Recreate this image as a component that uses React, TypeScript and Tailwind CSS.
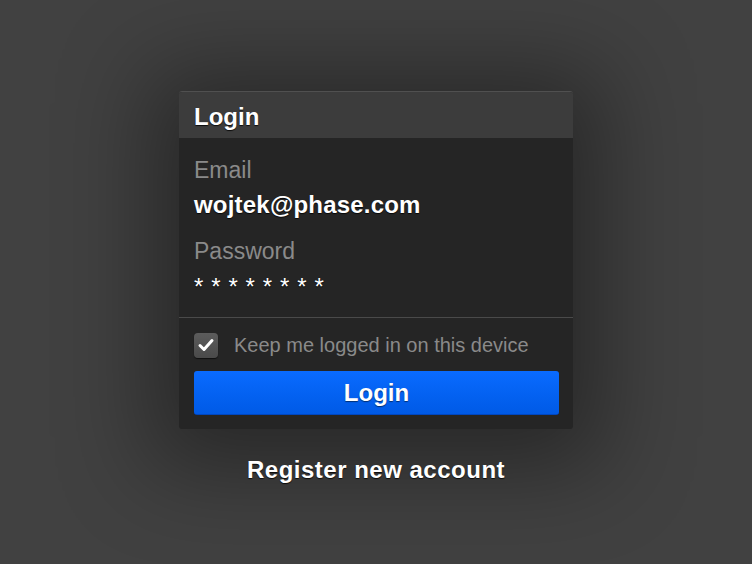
import React from "react";

export default function App() {
  const font = { fontFamily: '"Liberation Sans", Arial, Helvetica, sans-serif' };
  return (
    <div
      className="w-[752px] h-[564px] bg-[#414141] flex flex-col items-center pt-[91px] overflow-hidden"
      style={font}
    >
      <div className="w-[394px] rounded-[3px] bg-[#252525] shadow-[0_10px_90px_30px_rgba(0,0,0,0.38)] overflow-hidden border-t border-[#505050]">
        <div className="h-[46px] bg-[#3c3c3c] px-[15px] pt-[3px] flex items-center">
          <span className="text-[24px] leading-[28px] font-bold text-white [text-shadow:0_1px_1px_rgba(0,0,0,0.8)]">
            Login
          </span>
        </div>
        <div className="px-[15px] pt-[18px] pb-[16px] flex flex-col">
          <div className="text-[23px] leading-[28px] text-[#8a8a8a]">Email</div>
          <div className="mt-[7px] text-[24px] leading-[28px] font-bold text-white tracking-[0.2px] [text-shadow:0_1px_1px_rgba(0,0,0,0.8)]">
            wojtek@phase.com
          </div>
          <div className="mt-[18px] text-[23px] leading-[28px] text-[#8a8a8a]">Password</div>
          <div className="mt-[8px] text-[24px] leading-[28px] text-white tracking-[0.6px] [text-shadow:0_1px_1px_rgba(0,0,0,0.8)]">
            * * * * * * * *
          </div>
        </div>
        <div className="border-t border-[#4a4a4a] px-[15px] pt-[15px] pb-[14px] flex flex-col">
          <div className="flex items-center h-[24px]">
            <div className="w-[24px] h-[25px] rounded-[4px] bg-gradient-to-b from-[#5c5c5c] to-[#4a4a4a] shadow-[0_1px_1px_rgba(0,0,0,0.6)] flex items-center justify-center">
              <svg width="18" height="16" viewBox="0 0 18 16">
                <path
                  d="M3 8.5 L7 12.5 L15 3.5"
                  fill="none"
                  stroke="#ffffff"
                  strokeWidth="3"
                  strokeLinecap="round"
                  strokeLinejoin="round"
                />
              </svg>
            </div>
            <span className="ml-[16px] text-[20px] leading-[24px] text-[#8a8a8a]">
              Keep me logged in on this device
            </span>
          </div>
          <button className="mt-[14px] h-[44px] w-[365px] rounded-[3px] bg-gradient-to-b from-[#0a6bff] to-[#005ae6] border-b border-[#0047c0] flex items-center justify-center">
            <span className="text-[24px] leading-[28px] font-bold text-white [text-shadow:0_1px_1px_rgba(0,0,0,0.5)]">
              Login
            </span>
          </button>
        </div>
      </div>
      <div className="mt-[27px] text-[24px] leading-[28px] font-bold text-white tracking-[0.5px] [text-shadow:0_1px_1px_rgba(0,0,0,0.8)]">
        Register new account
      </div>
    </div>
  );
}
